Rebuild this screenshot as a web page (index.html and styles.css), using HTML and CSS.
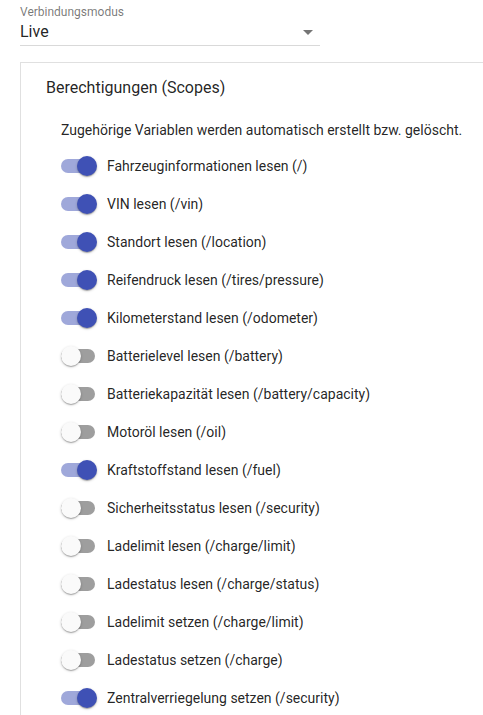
FILE: index.html
```html
<!DOCTYPE html>
<html lang="de">
<head>
<meta charset="utf-8">
<link rel="stylesheet" href="styles.css">
</head>
<body>
<div class="select">
  <div class="select-label">Verbindungsmodus</div>
  <div class="select-field">
    <span class="select-value">Live</span>
    <span class="select-arrow"></span>
  </div>
</div>
<div class="card">
  <div class="card-title">Berechtigungen (Scopes)</div>
  <div class="card-body">
    <div class="desc">Zugehörige Variablen werden automatisch erstellt bzw. gelöscht.</div>
    <div class="list">
      <div class="row on"><span class="switch"><span class="track"></span><span class="thumb"></span></span><span class="label">Fahrzeuginformationen lesen (/)</span></div>
      <div class="row on"><span class="switch"><span class="track"></span><span class="thumb"></span></span><span class="label">VIN lesen (/vin)</span></div>
      <div class="row on"><span class="switch"><span class="track"></span><span class="thumb"></span></span><span class="label">Standort lesen (/location)</span></div>
      <div class="row on"><span class="switch"><span class="track"></span><span class="thumb"></span></span><span class="label">Reifendruck lesen (/tires/pressure)</span></div>
      <div class="row on"><span class="switch"><span class="track"></span><span class="thumb"></span></span><span class="label">Kilometerstand lesen (/odometer)</span></div>
      <div class="row"><span class="switch"><span class="track"></span><span class="thumb"></span></span><span class="label">Batterielevel lesen (/battery)</span></div>
      <div class="row"><span class="switch"><span class="track"></span><span class="thumb"></span></span><span class="label">Batteriekapazität lesen (/battery/capacity)</span></div>
      <div class="row"><span class="switch"><span class="track"></span><span class="thumb"></span></span><span class="label">Motoröl lesen (/oil)</span></div>
      <div class="row on"><span class="switch"><span class="track"></span><span class="thumb"></span></span><span class="label">Kraftstoffstand lesen (/fuel)</span></div>
      <div class="row"><span class="switch"><span class="track"></span><span class="thumb"></span></span><span class="label">Sicherheitsstatus lesen (/security)</span></div>
      <div class="row"><span class="switch"><span class="track"></span><span class="thumb"></span></span><span class="label">Ladelimit lesen (/charge/limit)</span></div>
      <div class="row"><span class="switch"><span class="track"></span><span class="thumb"></span></span><span class="label">Ladestatus lesen (/charge/status)</span></div>
      <div class="row"><span class="switch"><span class="track"></span><span class="thumb"></span></span><span class="label">Ladelimit setzen (/charge/limit)</span></div>
      <div class="row"><span class="switch"><span class="track"></span><span class="thumb"></span></span><span class="label">Ladestatus setzen (/charge)</span></div>
      <div class="row on"><span class="switch"><span class="track"></span><span class="thumb"></span></span><span class="label">Zentralverriegelung setzen (/security)</span></div>
    </div>
  </div>
</div>
</body>
</html>
```

FILE: styles.css
```css
html, body {
  margin: 0;
  padding: 0;
  background: #fff;
  font-family: Roboto, "Noto Sans", sans-serif;
  color: rgba(0, 0, 0, 0.87);
  overflow: hidden;
}

.select {
  margin-left: 20px;
  width: 300px;
  padding-top: 4px;
}

.select-label {
  font-size: 12px;
  line-height: 16px;
  color: rgba(0, 0, 0, 0.54);
}

.select-field {
  display: flex;
  align-items: center;
  justify-content: space-between;
  height: 24px;
  border-bottom: 1px solid rgba(0, 0, 0, 0.15);
  padding-bottom: 1px;
}

.select-value {
  font-size: 16px;
  line-height: 24px;
}

.select-arrow {
  width: 0;
  height: 0;
  border-left: 5px solid transparent;
  border-right: 5px solid transparent;
  border-top: 5px solid rgba(0, 0, 0, 0.54);
  margin-right: 7px;
}

.card {
  margin-top: 16px;
  margin-left: 20px;
  border: 1px solid #e0e0e0;
  border-right: none;
  padding: 13px 0 0 25px;
}

.card-title {
  font-size: 16px;
  line-height: 24px;
}

.card-body {
  padding-left: 15px;
  padding-top: 20px;
}

.desc {
  font-size: 14px;
  line-height: 20px;
}

.list {
  display: flex;
  flex-direction: column;
  margin-top: 7px;
}

.row {
  display: flex;
  align-items: center;
  height: 38px;
  font-size: 14px;
}

.switch {
  position: relative;
  width: 36px;
  height: 20px;
  margin-right: 10px;
  flex: none;
}

.track {
  position: absolute;
  left: 0;
  top: 3px;
  width: 34px;
  height: 14px;
  border-radius: 7px;
  background: rgba(0, 0, 0, 0.38);
}

.thumb {
  position: absolute;
  top: 0;
  left: 0;
  width: 20px;
  height: 20px;
  border-radius: 50%;
  background: #fafafa;
  box-shadow: 0 1px 3px 0 rgba(0,0,0,.2), 0 1px 1px 0 rgba(0,0,0,.14), 0 2px 1px -1px rgba(0,0,0,.12);
}

.row.on .track {
  background: rgba(63, 81, 181, 0.5);
}

.row.on .thumb {
  left: 16px;
  background: #3f51b5;
}

.label {
  line-height: 20px;
}
```
